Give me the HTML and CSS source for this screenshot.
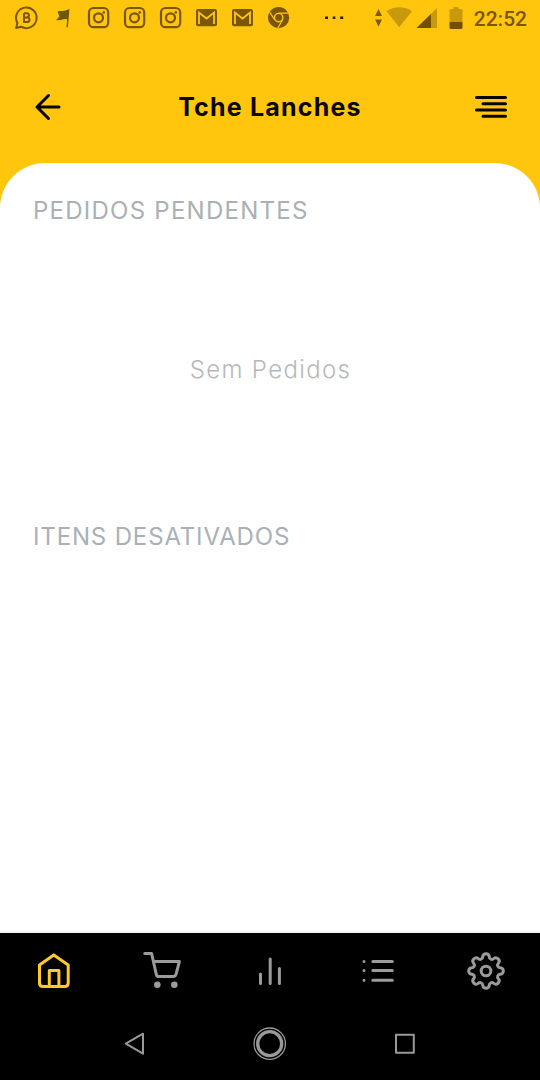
FILE: index.html
```html
<!DOCTYPE html>
<html lang="pt-BR">
<head>
  <meta charset="UTF-8" />
  <meta name="viewport" content="width=device-width, initial-scale=1.0"/>
  <title>Tche Lanches</title>
  <link rel="stylesheet" href="styles.css">
</head>
<body>
  <svg class="symbols" xmlns="http://www.w3.org/2000/svg">
    <symbol id="instagram" viewBox="0 0 36 36">
      <rect x="9" y="8" width="19.2" height="19.2" rx="4.5" fill="none" stroke="currentColor" stroke-width="2.2"/>
      <circle cx="18.5" cy="17.8" r="4.5" fill="none" stroke="currentColor" stroke-width="2.2"/>
      <circle cx="23.8" cy="12.4" r="1.3" fill="currentColor"/>
    </symbol>
    <symbol id="gmail" viewBox="0 0 36 36">
      <rect x="8" y="9" width="21" height="17.2" rx="2" fill="currentColor"/>
      <path d="M11 24V12.500l7.500 6 7.500-6V24" fill="none" stroke="#ffc60d" stroke-width="1.800"/>
    </symbol>
  </svg>

  <div class="status-bar">
    <div class="notifications">
      <svg viewBox="0 0 36 36">
        <path d="M8.100 28 9.400 22.900A10.300 10.300 0 1 1 13.200 26.700Z" fill="none" stroke="currentColor" stroke-width="2" stroke-linejoin="round"/>
        <path d="M16 13.200v8.800h3.200a2.300 2.300 0 0 0 0-4.600H16M16 13.200h2.800a2.100 2.100 0 0 1 0 4.200" fill="none" stroke="currentColor" stroke-width="2"/>
      </svg>
      <svg class="flag" viewBox="0 0 36 36"><path d="M13.500 11.500c3.500-1.500 6 .5 11.300-2.300l.6.200-1.500 17.800h-1.400l.6-7.700c-3-1.500-5 1.700-11 .5l3.300-3.500z" fill="currentColor"/></svg>
      <svg><use href="#instagram"/></svg>
      <svg><use href="#instagram"/></svg>
      <svg><use href="#instagram"/></svg>
      <svg><use href="#gmail"/></svg>
      <svg><use href="#gmail"/></svg>
      <svg viewBox="0 0 36 36">
        <circle cx="18.600" cy="17.600" r="10.600" fill="currentColor"/>
        <path d="M18.600 13.200H28M14.600 19.800 9.700 12.100M22.600 19.800 17.800 28" stroke="#ffc60d" stroke-width="1.200"/>
        <circle cx="18.600" cy="17.600" r="4.200" fill="currentColor" stroke="#ffc60d" stroke-width="1.400"/>
      </svg>
      <svg class="more" viewBox="0 0 36 36"><path d="M9 16.500h3v2.500H9zM16.800 16.500h2.500v2.500h-2.500zM24.200 16.500h3v2.500h-3z" fill="currentColor"/></svg>
    </div>
    <div class="system">
      <svg width="66" height="24" viewBox="0 0 66 24">
        <path d="M4.500 3 8 10H1zM4.500 20.500 1 13.500h7z" fill="#7b5b08"/>
        <path d="M25.200 21.300 12.500 5.300c7-5.300 18.500-5.300 25.500 0z" fill="#c8990b"/>
        <path d="M42.500 22 63 2v20z" fill="#c8990b"/>
        <path d="M42.500 22 57 8v14z" fill="#714f03"/>
      </svg>
      <svg class="battery" width="14" height="24" viewBox="0 0 14 24">
        <path d="M4.500 1h5v2H12q1.500 0 1.500 1.500V16H.5V4.500Q.5 3 2 3h2.500z" fill="#c8990b"/>
        <path d="M.5 16h13v5.500q0 1.500-1.500 1.500H2q-1.500 0-1.500-1.500z" fill="#714f03"/>
      </svg>
      <span class="clock">22:52</span>
    </div>
  </div>

  <header class="header">
    <svg class="back" viewBox="0 0 32 32"><path d="M16.500 4.500 5 16l11.500 11.500M5 16h22" /></svg>
    <h1>Tche Lanches</h1>
    <svg class="menu" viewBox="0 0 32 28"><path d="M1.500 4.500h29M8 10.700h22.500M1.500 16.900h29M8 23.300h22.500"/></svg>
  </header>

  <main class="content">
    <section class="pending">
      <h2>PEDIDOS PENDENTES</h2>
      <p class="empty">Sem Pedidos</p>
    </section>
    <section>
      <h2 class="disabled-title">ITENS DESATIVADOS</h2>
    </section>
  </main>

  <nav class="tabs">
    <svg class="active" viewBox="0 0 40 40"><path d="M5.500 14 19.800 3.900 34.200 14v18q0 3.500-3.500 3.500H9q-3.500 0-3.500-3.500zM15.300 35.500v-16h9.600v16"/></svg>
    <svg viewBox="0 0 40 40">
      <path d="M2.800 2.500h6.800L14.300 23.300q.5 2.300 2.500 2.300h14.400q2.300 0 2.800-2.300L37.400 10.500H11.500"/>
      <circle class="dot" cx="15.300" cy="33.700" r="3.300"/>
      <circle class="dot" cx="32.300" cy="33.700" r="3.300"/>
    </svg>
    <svg viewBox="0 0 40 40"><path d="M10.500 23v9.500M20.200 8v24.500M29.400 17.500v15"/></svg>
    <svg viewBox="0 0 40 40"><path d="M6 10.400h.01M14.800 10.400h19.500M6 19.600h.01M14.800 19.600h19.500M6 29.300h.01M14.800 29.300h19.500"/></svg>
    <svg class="gear" viewBox="-20 -20 40 40">
      <path d="M-3.300-14.030A3.300 3.300 0 0 1 3.300-14.030A2.560 2.560 0 0 0 7.590-12.250A3.300 3.300 0 0 1 12.250-7.590A2.560 2.560 0 0 0 14.030-3.300A3.300 3.300 0 0 1 14.030 3.300A2.560 2.560 0 0 0 12.250 7.590A3.300 3.300 0 0 1 7.590 12.250A2.560 2.560 0 0 0 3.300 14.030A3.300 3.300 0 0 1-3.300 14.030A2.560 2.560 0 0 0-7.590 12.250A3.300 3.300 0 0 1-12.250 7.590A2.560 2.560 0 0 0-14.030 3.300A3.300 3.300 0 0 1-14.030-3.300A2.560 2.560 0 0 0-12.250-7.590A3.300 3.300 0 0 1-7.590-12.250A2.560 2.560 0 0 0-3.300-14.030Z"/>
      <circle r="4.800"/>
    </svg>
  </nav>

  <div class="android-nav">
    <svg viewBox="0 0 36 36"><path d="M8.800 17.700 26 7.700v20z"/></svg>
    <svg viewBox="0 0 36 36"><circle cx="17.700" cy="17.700" r="15.700" stroke-width="1.300"/><circle cx="17.700" cy="17.700" r="12" stroke-width="3.300"/></svg>
    <svg viewBox="0 0 36 36"><path d="M9 8.800h17.800v17.900H9z"/></svg>
  </div>
</body>
</html>
```
FILE: styles.css
```css
* {
  box-sizing: border-box;
}
body {
  margin: 0;
  height: 1080px;
  font-family: Inter, "Open Sans", sans-serif;
  background-color: #ffc60d;
  display: flex;
  flex-direction: column;
  overflow: hidden;
}
svg {
  display: block;
  flex: none;
}
.symbols {
  width: 0;
  height: 0;
  position: absolute;
}
.status-bar {
  height: 36px;
  display: flex;
  justify-content: space-between;
  padding: 0 13px 0 8px;
  color: #7b5604;
}
.notifications {
  display: flex;
}
.notifications svg {
  width: 36px;
  height: 36px;
}
.notifications .flag {
  color: #6e5705;
}
.notifications .more {
  margin-left: 20px;
  color: #221a00;
}
.system {
  display: flex;
  align-items: center;
}
.battery {
  margin: 0 11px 0 9px;
}
.clock {
  font-family: Roboto, sans-serif;
  font-size: 21px;
  font-weight: 500;
  line-height: 36px;
  padding-top: 1px;
}
.header {
  height: 127px;
  padding: 15px 33px 0 32px;
  display: flex;
  align-items: center;
  justify-content: space-between;
}
.header svg {
  fill: none;
  stroke: #080400;
  stroke-width: 3;
  stroke-linecap: round;
  stroke-linejoin: round;
}
.back {
  width: 32px;
  height: 32px;
}
.menu {
  width: 32px;
  height: 28px;
}
h1 {
  margin: 0 -1px 0 0;
  font-size: 25px;
  font-weight: 700;
  letter-spacing: 1.2px;
  color: #0a0600;
  white-space: nowrap;
}
.content {
  height: 770px;
  padding: 32px 33px 0;
  background-color: #fff;
  border-radius: 45px 45px 0 0;
  border-bottom: 2px solid #f3f4f8;
}
.pending {
  height: 326px;
}
h2 {
  margin: 0;
  font-size: 24px;
  line-height: 32px;
  font-weight: 400;
  letter-spacing: 1.25px;
  color: #a9b0b7;
  white-space: nowrap;
}
.disabled-title {
  letter-spacing: 0.85px;
}
.empty {
  margin: 127px -1px 0 0;
  font-size: 24px;
  line-height: 32px;
  font-weight: 300;
  letter-spacing: 1.35px;
  text-align: center;
  color: #b5b9b9;
}
.tabs {
  height: 76px;
  background-color: #000;
  display: grid;
  grid-template-columns: repeat(5, 1fr);
  align-items: center;
  justify-items: center;
}
.tabs svg {
  width: 40px;
  height: 40px;
  fill: none;
  stroke: #9b9b9b;
  stroke-width: 3;
  stroke-linecap: round;
  stroke-linejoin: round;
}
.tabs .active {
  stroke: #ffc82b;
}
.tabs .dot {
  fill: #9b9b9b;
  stroke: none;
}
.android-nav {
  height: 71px;
  padding: 0 68px 1px 67px;
  background-color: #000;
  display: grid;
  grid-template-columns: repeat(3, 1fr);
  align-items: center;
  justify-items: center;
}
.android-nav svg {
  width: 36px;
  height: 36px;
  fill: none;
  stroke: #999;
  stroke-width: 2;
  stroke-linejoin: round;
}
```
